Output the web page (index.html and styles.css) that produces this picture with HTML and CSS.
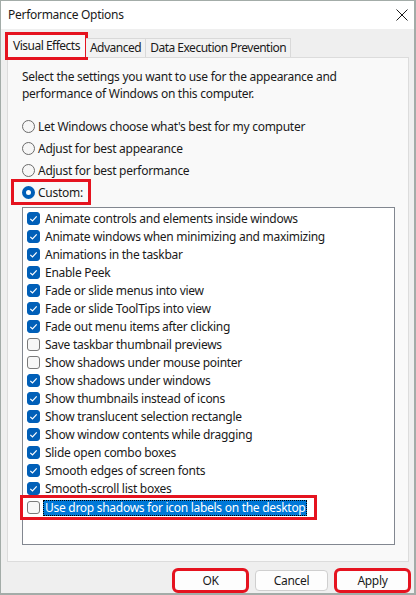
FILE: index.html
```html
<!DOCTYPE html>
<html>
<head>
<meta charset="utf-8">
<link rel="stylesheet" href="styles.css">
</head>
<body>
<div class="window">
  <div class="titlebar">
    <span class="title">Performance Options</span>
    <svg class="close" width="12" height="12" viewBox="0 0 12 12"><path d="M0.5 0.5 L11.5 11.5 M11.5 0.5 L0.5 11.5" stroke="#1a1a1a" stroke-width="1" fill="none"/></svg>
  </div>
  <div class="content">
    <div class="tabs">
      <div class="tab active mark">Visual Effects</div>
      <div class="tab">Advanced</div>
      <div class="tab">Data Execution Prevention</div>
    </div>
    <div class="panel">
      <p class="intro">Select the settings you want to use for the appearance and performance of Windows on this computer.</p>
      <div class="radios">
        <div class="radio"><span class="rb"></span>Let Windows choose what's best for my computer</div>
        <div class="radio"><span class="rb"></span>Adjust for best appearance</div>
        <div class="radio"><span class="rb"></span>Adjust for best performance</div>
        <div class="radio custom"><span class="rb on"></span>Custom:</div>
      </div>
      <div class="list">
        <div class="item"><span class="cb on"><svg viewBox="0 0 13 13"><path d="M3.3 6.9 L5.5 9 L9.7 4.4"/></svg></span>Animate controls and elements inside windows</div>
        <div class="item"><span class="cb on"><svg viewBox="0 0 13 13"><path d="M3.3 6.9 L5.5 9 L9.7 4.4"/></svg></span>Animate windows when minimizing and maximizing</div>
        <div class="item"><span class="cb on"><svg viewBox="0 0 13 13"><path d="M3.3 6.9 L5.5 9 L9.7 4.4"/></svg></span>Animations in the taskbar</div>
        <div class="item"><span class="cb on"><svg viewBox="0 0 13 13"><path d="M3.3 6.9 L5.5 9 L9.7 4.4"/></svg></span>Enable Peek</div>
        <div class="item"><span class="cb on"><svg viewBox="0 0 13 13"><path d="M3.3 6.9 L5.5 9 L9.7 4.4"/></svg></span>Fade or slide menus into view</div>
        <div class="item"><span class="cb on"><svg viewBox="0 0 13 13"><path d="M3.3 6.9 L5.5 9 L9.7 4.4"/></svg></span>Fade or slide ToolTips into view</div>
        <div class="item"><span class="cb on"><svg viewBox="0 0 13 13"><path d="M3.3 6.9 L5.5 9 L9.7 4.4"/></svg></span>Fade out menu items after clicking</div>
        <div class="item"><span class="cb"></span>Save taskbar thumbnail previews</div>
        <div class="item"><span class="cb"></span>Show shadows under mouse pointer</div>
        <div class="item"><span class="cb on"><svg viewBox="0 0 13 13"><path d="M3.3 6.9 L5.5 9 L9.7 4.4"/></svg></span>Show shadows under windows</div>
        <div class="item"><span class="cb on"><svg viewBox="0 0 13 13"><path d="M3.3 6.9 L5.5 9 L9.7 4.4"/></svg></span>Show thumbnails instead of icons</div>
        <div class="item"><span class="cb on"><svg viewBox="0 0 13 13"><path d="M3.3 6.9 L5.5 9 L9.7 4.4"/></svg></span>Show translucent selection rectangle</div>
        <div class="item"><span class="cb on"><svg viewBox="0 0 13 13"><path d="M3.3 6.9 L5.5 9 L9.7 4.4"/></svg></span>Show window contents while dragging</div>
        <div class="item"><span class="cb on"><svg viewBox="0 0 13 13"><path d="M3.3 6.9 L5.5 9 L9.7 4.4"/></svg></span>Slide open combo boxes</div>
        <div class="item"><span class="cb on"><svg viewBox="0 0 13 13"><path d="M3.3 6.9 L5.5 9 L9.7 4.4"/></svg></span>Smooth edges of screen fonts</div>
        <div class="item"><span class="cb on"><svg viewBox="0 0 13 13"><path d="M3.3 6.9 L5.5 9 L9.7 4.4"/></svg></span>Smooth-scroll list boxes</div>
        <div class="item selected"><span class="cb"></span><span class="sel">Use drop shadows for icon labels on the desktop</span></div>
      </div>
    </div>
    <div class="buttons">
      <button class="btn mark">OK</button>
      <button class="btn">Cancel</button>
      <button class="btn mark">Apply</button>
    </div>
  </div>
</div>
</body>
</html>
```
FILE: styles.css
```css
html, body {
  margin: 0;
  padding: 0;
  background: #ffffff;
}
body {
  font-family: "Noto Sans", "Open Sans", sans-serif;
  font-size: 12px;
  letter-spacing: -0.28px;
  color: #1a1a1a;
}
.window {
  width: 416px;
  height: 595px;
  box-sizing: border-box;
  border: 1px solid #a3aca8;
  border-right-width: 2px;
  border-bottom-width: 2px;
  display: flex;
  flex-direction: column;
}
.titlebar {
  height: 28px;
  background: #ffffff;
  display: flex;
  align-items: center;
  justify-content: space-between;
  padding: 0 6px 2px 7px;
  box-sizing: border-box;
}
.title {
  font-size: 12px;
  color: #1a1a1a;
}
.close {
  margin-top: 2px;
}
.content {
  flex: 1;
  background: #efefef;
  padding: 5px 5px 0 6px;
  display: flex;
  flex-direction: column;
}
.tabs {
  display: flex;
  align-items: flex-end;
  height: 23px;
  position: relative;
  z-index: 1;
}
.tab {
  height: 19px;
  box-sizing: border-box;
  border: 1px solid #d9d9d9;
  border-bottom: none;
  border-left: none;
  background: #f2f2f2;
  padding: 0 4px;
  display: flex;
  align-items: center;
  line-height: 1;
  letter-spacing: -0.5px;
}
.tab.active {
  background: #f9f9f9;
  border-left: 1px solid #d9d9d9;
  padding: 0 5px 2px 5px;
  margin-bottom: -1px;
  height: 24px;
}
.mark {
  outline: 3px solid #e5131f;
  outline-offset: -1px;
}
.panel {
  height: 505px;
  box-sizing: border-box;
  background: #f9f9f9;
  border: 1px solid #dcdcdc;
  padding: 10px 13px 0 14px;
}
.intro {
  margin: 0;
  line-height: 17px;
  width: 330px;
}
.radios {
  margin-top: 13px;
  display: flex;
  flex-direction: column;
}
.radio {
  height: 22px;
  display: flex;
  align-items: center;
  gap: 3px;
}
.radio.custom {
  align-self: flex-start;
  outline: 3px solid #e5131f;
  outline-offset: -1px;
  margin-left: -9px;
  padding: 0 6px 0 9px;
}
.rb {
  width: 13px;
  height: 13px;
  box-sizing: border-box;
  border: 1px solid #6b6b6b;
  border-radius: 50%;
  background: #f6f6f6;
  flex: none;
}
.rb.on {
  border: 4px solid #005fb8;
  background: #ffffff;
}
.list {
  margin-top: 4px;
  height: 338px;
  box-sizing: border-box;
  border: 1px solid #828790;
  background: #ffffff;
  padding: 1px 0 0 4px;
}
.item {
  height: 18px;
  display: flex;
  align-items: center;
  gap: 5px;
  white-space: nowrap;
}
.cb {
  width: 13px;
  height: 13px;
  box-sizing: border-box;
  border: 1px solid #7a7a7a;
  border-radius: 3px;
  background: #f7f7f7;
  flex: none;
  display: flex;
}
.cb.on {
  background: #005fb8;
  border-color: #005fb8;
}
.cb svg {
  width: 13px;
  height: 13px;
  margin: -1px;
}
.cb svg path {
  fill: none;
  stroke: #ffffff;
  stroke-width: 1.2;
}
.item.selected {
  align-self: flex-start;
  width: 288px;
  margin-left: -5px;
  padding-left: 5px;
  gap: 3px;
  outline: 3px solid #e5131f;
  outline-offset: -1px;
  height: 21px;
  margin-top: 0;
}
.sel {
  background: #0078d7;
  color: #ffffff;
  outline: 1px dotted #000000;
  outline-offset: -1px;
  padding: 0 2px;
  line-height: 16px;
}
.buttons {
  display: flex;
  justify-content: flex-end;
  gap: 8px;
  margin-top: 8px;
}
.btn {
  width: 73px;
  height: 21px;
  box-sizing: border-box;
  font-family: "Noto Sans", "Open Sans", sans-serif;
  font-size: 12px;
  letter-spacing: -0.28px;
  color: #1a1a1a;
  background: #fdfdfd;
  border: 1px solid #cfcfcf;
  border-radius: 4px;
  padding: 0;
  line-height: 1;
}
```
